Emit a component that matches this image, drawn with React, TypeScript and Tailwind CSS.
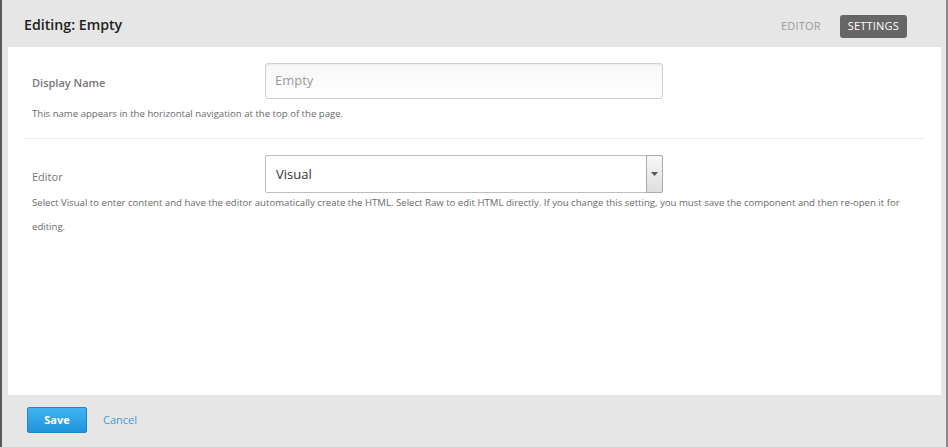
import React from "react";

export default function App() {
  return (
    <div
      className="w-[948px] h-[447px] bg-[#e6e6e6] flex flex-col border-l-[2px] border-l-[#5a5a5a] border-r-[2px] border-r-[#8a8a8a] overflow-hidden"
      style={{ fontFamily: '"Open Sans", "Liberation Sans", sans-serif' }}
    >
      <div className="h-[47px] shrink-0 flex items-center justify-between pl-[22px] pr-[39px]">
        <div className="text-[14.2px] font-semibold text-[#222] pt-[2px]">Editing: Empty</div>
        <div className="flex items-center gap-[19px] mt-[5px]">
          <span className="text-[11px] text-[#9a9a9a] tracking-[0.2px]">EDITOR</span>
          <span className="h-[23px] px-[8px] flex items-center rounded-[3px] bg-[#666666] text-white text-[11px] tracking-[0.2px]">
            SETTINGS
          </span>
        </div>
      </div>
      <div className="ml-[6px] mr-[5px] h-[348px] shrink-0 bg-white px-[16px]">
        <div className="pt-[16px] pb-[17px] border-b border-[#ececec]">
          <div className="flex items-center">
            <div className="w-[241px] pl-[8px] text-[11px] font-semibold text-[#777] pt-[4px]">Display Name</div>
            <div className="w-[398px] h-[36px] border border-[#cfcfcf] rounded-[3px] bg-gradient-to-b from-[#f7f7f7] to-white flex items-center pl-[9px] text-[13px] text-[#9a9a9a] shadow-[inset_0_1px_2px_rgba(0,0,0,0.06)]">
              Empty
            </div>
          </div>
          <div className="pl-[8px] mt-[8px] text-[9.6px] text-[#6a6a6a]">
            This name appears in the horizontal navigation at the top of the page.
          </div>
        </div>
        <div className="pt-[16px]">
          <div className="flex items-center">
            <div className="w-[241px] pl-[8px] text-[11px] text-[#777] pt-[6px]">Editor</div>
            <div className="w-[398px] h-[38px] border border-[#bdbdbd] rounded-[2px] bg-white flex items-stretch">
              <div className="flex-1 flex items-center pl-[10px] text-[13px] text-[#333]">Visual</div>
              <div className="w-[17px] border border-[#aaa] bg-gradient-to-b from-[#f8f8f8] to-[#dedede] flex items-center justify-center -my-[1px] -mr-[1px] rounded-[2px]">
                <svg width="7" height="4" viewBox="0 0 7 4">
                  <path d="M0 0 L7 0 L3.5 4 Z" fill="#555" />
                </svg>
              </div>
            </div>
          </div>
          <div className="pl-[8px] -mt-[2px] text-[9.6px] leading-[24px] text-[#6a6a6a] pr-[16px]">
            Select Visual to enter content and have the editor automatically create the HTML. Select Raw to edit HTML directly. If you change this setting, you must save the component and then re-open it for editing.
          </div>
        </div>
      </div>
      <div className="flex-1 flex items-center pl-[25px] gap-[16px] -mt-[2px]">
        <span className="w-[60px] h-[26px] rounded-[2px] border border-[#1d86c8] bg-gradient-to-b from-[#40b4f0] to-[#1e93db] flex items-center justify-center text-white text-[11px] font-bold">
          Save
        </span>
        <span className="text-[11px] text-[#3d9bd6]">Cancel</span>
      </div>
    </div>
  );
}
